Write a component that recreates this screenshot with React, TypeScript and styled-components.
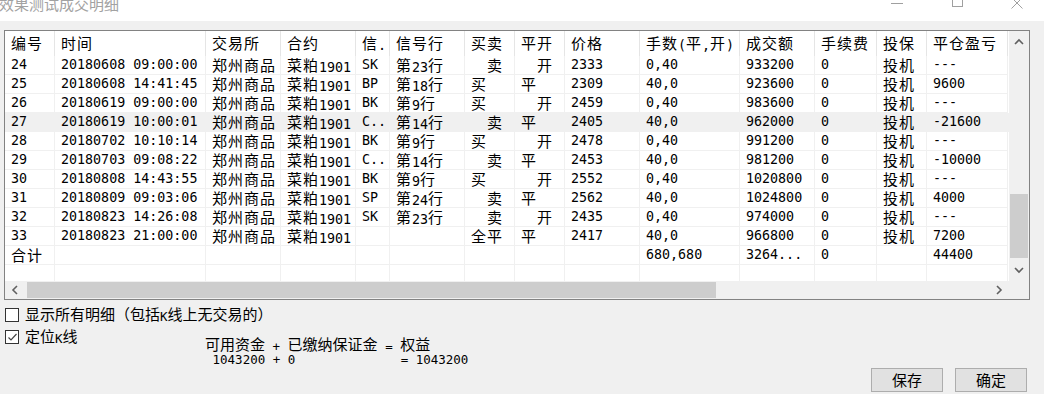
import React from "react";
import styled, { createGlobalStyle } from "styled-components";

const GlobalStyle = createGlobalStyle`
  html, body {
    margin: 0;
    padding: 0;
    background: #f0f0f0;
    overflow: hidden;
  }
  * {
    box-sizing: border-box;
  }
`;

const COLS = [50, 151, 75, 75, 34, 75, 50, 50, 75, 100, 75, 62, 50, 81];

const HEAD = [
  "编号", "时间", "交易所", "合约", "信.", "信号行", "买卖", "平开",
  "价格", "手数(平,开)", "成交额", "手续费", "投保", "平仓盈亏",
];

const EX = "郑州商品";
const CT = "菜粕1901";

const ROWS: string[][] = [
  ["24", "20180608 09:00:00", EX, CT, "SK", "第23行", "  卖", "  开", "2333", "0,40", "933200", "0", "投机", "---"],
  ["25", "20180608 14:41:45", EX, CT, "BP", "第18行", "买", "平", "2309", "40,0", "923600", "0", "投机", "9600"],
  ["26", "20180619 09:00:00", EX, CT, "BK", "第9行", "买", "  开", "2459", "0,40", "983600", "0", "投机", "---"],
  ["27", "20180619 10:00:01", EX, CT, "C..", "第14行", "  卖", "平", "2405", "40,0", "962000", "0", "投机", "-21600"],
  ["28", "20180702 10:10:14", EX, CT, "BK", "第9行", "买", "  开", "2478", "0,40", "991200", "0", "投机", "---"],
  ["29", "20180703 09:08:22", EX, CT, "C..", "第14行", "  卖", "平", "2453", "40,0", "981200", "0", "投机", "-10000"],
  ["30", "20180808 14:43:55", EX, CT, "BK", "第9行", "买", "  开", "2552", "0,40", "1020800", "0", "投机", "---"],
  ["31", "20180809 09:03:06", EX, CT, "SP", "第24行", "  卖", "平", "2562", "40,0", "1024800", "0", "投机", "4000"],
  ["32", "20180823 14:26:08", EX, CT, "SK", "第23行", "  卖", "  开", "2435", "0,40", "974000", "0", "投机", "---"],
  ["33", "20180823 21:00:00", EX, CT, "", "", "全平", "平", "2417", "40,0", "966800", "0", "投机", "7200"],
  ["合计", "", "", "", "", "", "", "", "", "680,680", "3264...", "0", "", "44400"],
  ["", "", "", "", "", "", "", "", "", "", "", "", "", ""],
];

const SELECTED = 3;

// scroll state of the list (thumb positions in px)
const V_THUMB = { top: 141, size: 64 };
const H_THUMB = { left: 2, size: 689 };

const CJK = /([\u3000-\u9fff\uff00-\uffef]+)/;

// SimSun-like mix: half width ascii, full width han
const Txt = ({ children }: { children: string }) => (
  <>
    {children.split(CJK).map((part, i) =>
      CJK.test(part) ? <Han key={i}>{part}</Han> : part
    )}
  </>
);

export default function App() {
  return (
    <Window>
      <GlobalStyle />
      <TitleBar>
        <Title>效果测试成交明细</Title>
        <Controls>
          <Ctl>
            <svg width="16" height="16" viewBox="0 0 16 16">
              <line x1="2" y1="9.5" x2="14" y2="9.5" stroke="#a0a0a0" />
            </svg>
          </Ctl>
          <Ctl>
            <svg width="16" height="16" viewBox="0 0 16 16">
              <rect x="3.5" y="3.5" width="10" height="9" fill="none" stroke="#a0a0a0" />
            </svg>
          </Ctl>
          <Ctl>
            <svg width="16" height="16" viewBox="0 0 16 16">
              <path d="M2.5 3.5 L13.5 14.5 M13.5 3.5 L2.5 14.5" stroke="#a0a0a0" />
            </svg>
          </Ctl>
        </Controls>
      </TitleBar>

      <Content>
        <TableBox>
          <GridView>
            <HeadRow>
              {HEAD.map((h, i) => (
                <HeadCell key={i}>
                  <Txt>{h}</Txt>
                </HeadCell>
              ))}
            </HeadRow>
            {ROWS.map((r, i) => (
              <Row key={i} $selected={i === SELECTED}>
                {r.map((c, j) => (
                  <Cell key={j}>
                    <Txt>{c}</Txt>
                  </Cell>
                ))}
              </Row>
            ))}
          </GridView>

          <VScroll>
            <ArrowBox $h={22}>
              <Chevron dir="up" />
            </ArrowBox>
            <VTrack>
              <VThumb style={{ marginTop: V_THUMB.top, height: V_THUMB.size }} />
            </VTrack>
            <ArrowBox $h={22}>
              <Chevron dir="down" />
            </ArrowBox>
          </VScroll>

          <HScroll>
            <ArrowBox $w={20}>
              <Chevron dir="left" />
            </ArrowBox>
            <HTrack>
              <HThumb style={{ marginLeft: H_THUMB.left, width: H_THUMB.size }} />
            </HTrack>
            <ArrowBox $w={20}>
              <Chevron dir="right" />
            </ArrowBox>
          </HScroll>
          <Corner />
        </TableBox>

        <Footer>
          <Options>
            <Option>
              <Box />
              <Label>
                <Txt>显示所有明细（包括K线上无交易的）</Txt>
              </Label>
            </Option>
            <Option>
              <Box>
                <svg width="11" height="11" viewBox="0 0 11 11">
                  <polyline points="1.5,5.5 4,8 9.5,2" fill="none" stroke="#444" strokeWidth="1.2" />
                </svg>
              </Box>
              <Label>
                <Txt>定位K线</Txt>
              </Label>
            </Option>
          </Options>

          <Formula>
            <Line>
              <Txt>可用资金 + 已缴纳保证金 = 权益</Txt>
            </Line>
            <Line>{" 1043200 + 0              = 1043200"}</Line>
          </Formula>

          <Buttons>
            <Button>保存</Button>
            <Button>确定</Button>
          </Buttons>
        </Footer>
      </Content>
    </Window>
  );
}

const Chevron = ({ dir }: { dir: "up" | "down" | "left" | "right" }) => {
  const pts = {
    up: "1,6 5,2 9,6",
    down: "1,2 5,6 9,2",
    left: "6,1 2,5 6,9",
    right: "2,1 6,5 2,9",
  }[dir];
  const vertical = dir === "up" || dir === "down";
  return (
    <svg
      width={vertical ? 10 : 8}
      height={vertical ? 8 : 10}
      viewBox={vertical ? "0 0 10 8" : "0 0 8 10"}
    >
      <polyline points={pts} fill="none" stroke="#606060" strokeWidth="1.6" />
    </svg>
  );
};

const Window = styled("div")`
  width: 1044px;
  height: 394px;
  background: #f0f0f0;
  font-family: "DejaVu Sans Mono", "Noto Sans CJK SC", monospace;
  color: #000;
  /* flex */
  display: flex;
  flex-direction: column;
`;

const Han = styled("span")`
  font-family: "Noto Sans CJK SC", sans-serif;
  font-size: 15px;
  letter-spacing: var(--han-gap, 0px);
  vertical-align: 1px;
`;

const TitleBar = styled("div")`
  height: 21px;
  background: #fff;
  overflow: hidden;
  display: flex;
  align-items: flex-start;
`;

const Title = styled("div")`
  margin: -5px 0 0 -1px;
  font-family: "Noto Sans CJK SC", sans-serif;
  font-size: 15px;
  line-height: 18px;
  color: #a2a2a2;
  flex: 1;
`;

const Controls = styled("div")`
  display: flex;
  margin-right: -3px;
`;

const Ctl = styled("div")`
  width: 60px;
  height: 21px;
  display: flex;
  justify-content: center;
  align-items: flex-start;
  svg {
    margin-top: -6px;
  }
`;

const Content = styled("div")`
  flex: 1;
  padding: 9px 14px 0 4px;
  display: flex;
  flex-direction: column;
`;

const TableBox = styled("div")`
  height: 270px;
  border: 1px solid #828282;
  background: #fff;
  display: grid;
  grid-template-columns: 1fr 20px;
  grid-template-rows: 1fr 18px;
  overflow: hidden;
`;

const GridView = styled("div")`
  overflow: hidden;
  background: #fff;
  --han-gap: 1px;
  font-size: 13.33px;
`;

const RowBase = styled("div")`
  display: grid;
  grid-template-columns: ${COLS.map((w) => `${w}px`).join(" ")};
`;

const HeadRow = styled(RowBase)`
  height: 25px;
`;

const Row = styled(RowBase)<{ $selected?: boolean }>`
  height: 19px;
  background: ${(p) => (p.$selected ? "#f0f0f0" : "#fff")};
`;

const HeadCell = styled("div")`
  padding-left: 6px;
  line-height: 24px;
  border-right: 1px solid #e5e5e5;
  white-space: pre;
  overflow: hidden;
`;

const Cell = styled("div")`
  padding-left: 6px;
  line-height: 18px;
  border-right: 1px solid #f0f0f0;
  border-bottom: 1px solid #f0f0f0;
  white-space: pre;
  overflow: hidden;
`;

const VScroll = styled("div")`
  background: #f0f0f0;
  display: flex;
  flex-direction: column;
`;

const ArrowBox = styled("div")<{ $w?: number; $h?: number }>`
  ${(p) => (p.$w ? `width: ${p.$w}px;` : "")}
  ${(p) => (p.$h ? `height: ${p.$h}px;` : "")}
  flex-shrink: 0;
  display: flex;
  align-items: center;
  justify-content: center;
`;

const VTrack = styled("div")`
  flex: 1;
  display: flex;
  flex-direction: column;
`;

const VThumb = styled("div")`
  margin: 0 1px;
  background: #cdcdcd;
`;

const HScroll = styled("div")`
  background: #f0f0f0;
  display: flex;
`;

const HTrack = styled("div")`
  flex: 1;
  display: flex;
  padding: 1px 0;
`;

const HThumb = styled("div")`
  background: #cdcdcd;
`;

const Corner = styled("div")`
  background: #f0f0f0;
`;

const Footer = styled("div")`
  flex: 1;
  padding: 4px 3px 2px 1px;
  display: flex;
  font-size: 12.5px;
`;

const Options = styled("div")`
  width: 200px;
  flex-shrink: 0;
  display: flex;
  flex-direction: column;
`;

const Option = styled("div")`
  height: 22px;
  display: flex;
  align-items: center;
  gap: 6px;
  white-space: nowrap;
`;

const Box = styled("div")`
  width: 14px;
  height: 14px;
  flex-shrink: 0;
  border: 1px solid #333;
  background: #fff;
  display: flex;
  align-items: center;
  justify-content: center;
`;

const Label = styled("span")`
  line-height: 18px;
`;

const Formula = styled("div")`
  margin-top: 32px;
  white-space: pre;
`;

const Line = styled("div")`
  line-height: 16px;
  height: 16px;
`;

const Buttons = styled("div")`
  margin-left: auto;
  align-self: flex-end;
  display: flex;
  gap: 12px;
`;

const Button = styled("button")`
  width: 72px;
  height: 24px;
  padding: 0;
  border: 1px solid #adadad;
  background: #e1e1e1;
  font-family: "Noto Sans CJK SC", sans-serif;
  font-size: 15px;
  line-height: 20px;
  color: #000;
`;
